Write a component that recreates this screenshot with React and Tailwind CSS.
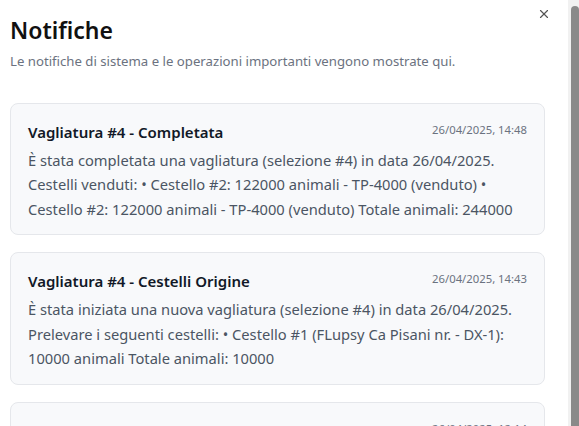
import { X } from 'lucide-react';

const notifications = [
  {
    title: 'Vagliatura #4 - Completata',
    date: '26/04/2025, 14:48',
    lines: [
      'È stata completata una vagliatura (selezione #4) in data 26/04/2025.',
      'Cestelli venduti: • Cestello #2: 122000 animali - TP-4000 (venduto) •',
      'Cestello #2: 122000 animali - TP-4000 (venduto) Totale animali: 244000',
    ],
  },
  {
    title: 'Vagliatura #4 - Cestelli Origine',
    date: '26/04/2025, 14:43',
    lines: [
      'È stata iniziata una nuova vagliatura (selezione #4) in data 26/04/2025.',
      'Prelevare i seguenti cestelli: • Cestello #1 (FLupsy Ca Pisani nr. - DX-1):',
      '10000 animali Totale animali: 10000',
    ],
  },
  {
    title: 'Vagliatura #3 - Completata',
    date: '26/04/2025, 12:14',
    lines: ['È stata completata una vagliatura (selezione #3) in data 26/04/2025.'],
  },
];

function NotificationCard({ item }) {
  return (
    <div className="rounded-lg border border-[#e5e7eb] bg-[#f8f9fb] px-[17px] pt-[16px] pb-[13px]">
      <div className="flex items-start justify-between">
        <h3 className="mt-[2px] text-[15px] font-semibold text-[#111827] leading-5">{item.title}</h3>
        <span className="text-[11.3px] text-[#6b7280] leading-5">{item.date}</span>
      </div>
      <div className="mt-[6px] text-[14.7px] leading-[24.5px] text-[#4b5563]">
        {item.lines.map((line, i) => (
          <div key={i} className="whitespace-nowrap">{line}</div>
        ))}
      </div>
    </div>
  );
}

export default function App() {
  return (
    <div
      className="flex h-[426px] w-[579px] overflow-hidden bg-white"
      style={{ fontFamily: '"Noto Sans", "Open Sans", sans-serif' }}
    >
      <div className="relative flex-1 px-[10px] pt-[14px]">
        <button className="absolute right-[17px] top-[7px] text-[#555]">
          <X size={14} strokeWidth={2} />
        </button>
        <h2 className="text-[23px] font-semibold leading-8 text-[#111]">Notifiche</h2>
        <p className="mt-[6px] text-[13.2px] text-[#6b7280]">
          Le notifiche di sistema e le operazioni importanti vengono mostrate qui.
        </p>
        <div className="mt-[31px] flex w-[535px] flex-col gap-[17px]">
          {notifications.map((n, i) => (
            <NotificationCard key={i} item={n} />
          ))}
        </div>
      </div>
      <div className="flex w-[11px] flex-col bg-[#f1f1f1] pl-[3px] pt-[6px]">
        <div className="flex-1 rounded-t-[4px] bg-[#8a8a8a]" />
      </div>
    </div>
  );
}
